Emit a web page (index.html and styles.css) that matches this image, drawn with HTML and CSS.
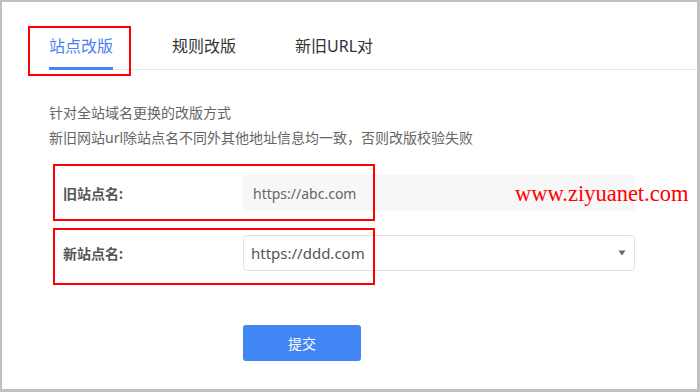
FILE: index.html
```html
<!DOCTYPE html>
<html>
<head>
  <meta charset="UTF-8">
  <title>站点改版</title>
  <link rel="stylesheet" href="styles.css">
</head>
<body>
  <div class="frame">
    <div class="tabs">
      <div class="tab active">站点改版</div>
      <div class="tab">规则改版</div>
      <div class="tab">新旧URL对</div>
    </div>

    <div class="panel">
      <p class="desc">针对全站域名更换的改版方式</p>
      <p class="desc">新旧网站url除站点名不同外其他地址信息均一致，否则改版校验失败</p>

      <div class="form">
        <div class="row">
          <label class="label">旧站点名:</label>
          <div class="field readonly">https://abc.com</div>
        </div>
        <div class="row">
          <label class="label">新站点名:</label>
          <div class="field select">
            <span>https://ddd.com</span>
            <svg class="arrow" width="8" height="6" viewBox="0 0 8 6"><path d="M0.5 0.5 H7.5 L4 5.5 Z" fill="#666"/></svg>
          </div>
        </div>
        <div class="row actions">
          <button class="submit" type="button">提交</button>
        </div>
      </div>
    </div>

    <!-- annotation boxes drawn over the page -->
    <div class="mark mark-tab"></div>
    <div class="mark mark-old"></div>
    <div class="mark mark-new"></div>
    <div class="watermark">www.ziyuanet.com</div>
  </div>
</body>
</html>
```

FILE: styles.css
```css
html, body {
  margin: 0;
  padding: 0;
  background: #fff;
}

body {
  font-family: "Noto Sans", "Noto Sans CJK SC", sans-serif;
  color: #333;
}

.frame {
  position: relative;
  width: 700px;
  height: 392px;
  box-sizing: border-box;
  border-style: solid;
  border-color: #c0c0c0;
  border-width: 2px 3px 3px 2px;
  background: #fff;
}

.tabs {
  display: flex;
  gap: 59px;
  margin-left: 47px;
  border-bottom: 1px solid #e8e8e8;
}

.tab {
  font-size: 16px;
  line-height: 24px;
  padding: 32px 0 9px;
  border-bottom: 3px solid transparent;
  margin-bottom: -1px;
  color: #333;
}

.tab.active {
  color: #4a7ef5;
  border-bottom-color: #4285f4;
}

.panel {
  margin-left: 47px;
  padding-top: 30px;
}

.desc {
  margin: 0;
  font-size: 14px;
  line-height: 25px;
  color: #666;
}

.form {
  margin-top: 25px;
  padding-left: 14px;
  display: flex;
  flex-direction: column;
  gap: 24px;
}

.row {
  display: flex;
  align-items: center;
}

.label {
  width: 180px;
  font-size: 14px;
  font-weight: bold;
  color: #555;
}

.field {
  width: 392px;
  height: 36px;
  box-sizing: border-box;
  border-radius: 4px;
  display: flex;
  align-items: center;
}

.readonly {
  background: #f7f7f7;
  padding-left: 10px;
  font-size: 14px;
  color: #666;
}

.select {
  border: 1px solid #e2e2e2;
  padding: 0 8px 0 7px;
  font-size: 15px;
  color: #555;
  justify-content: space-between;
}

.actions {
  margin-top: 30px;
  padding-left: 180px;
}

.submit {
  width: 118px;
  height: 36px;
  border: none;
  border-radius: 3px;
  background: #4285f4;
  color: #fff;
  font-family: inherit;
  font-size: 14px;
  cursor: pointer;
}

.mark {
  position: absolute;
  box-sizing: border-box;
  border: 2px solid #f00;
}

.mark-tab {
  left: 26px;
  top: 24px;
  width: 103px;
  height: 50px;
}

.mark-old {
  left: 51px;
  top: 162px;
  width: 322px;
  height: 57px;
}

.mark-new {
  left: 51px;
  top: 226px;
  width: 322px;
  height: 57px;
}

.watermark {
  position: absolute;
  left: 513px;
  top: 179px;
  font-family: "Liberation Serif", serif;
  font-size: 22.5px;
  line-height: 26px;
  color: #f00;
}
```
